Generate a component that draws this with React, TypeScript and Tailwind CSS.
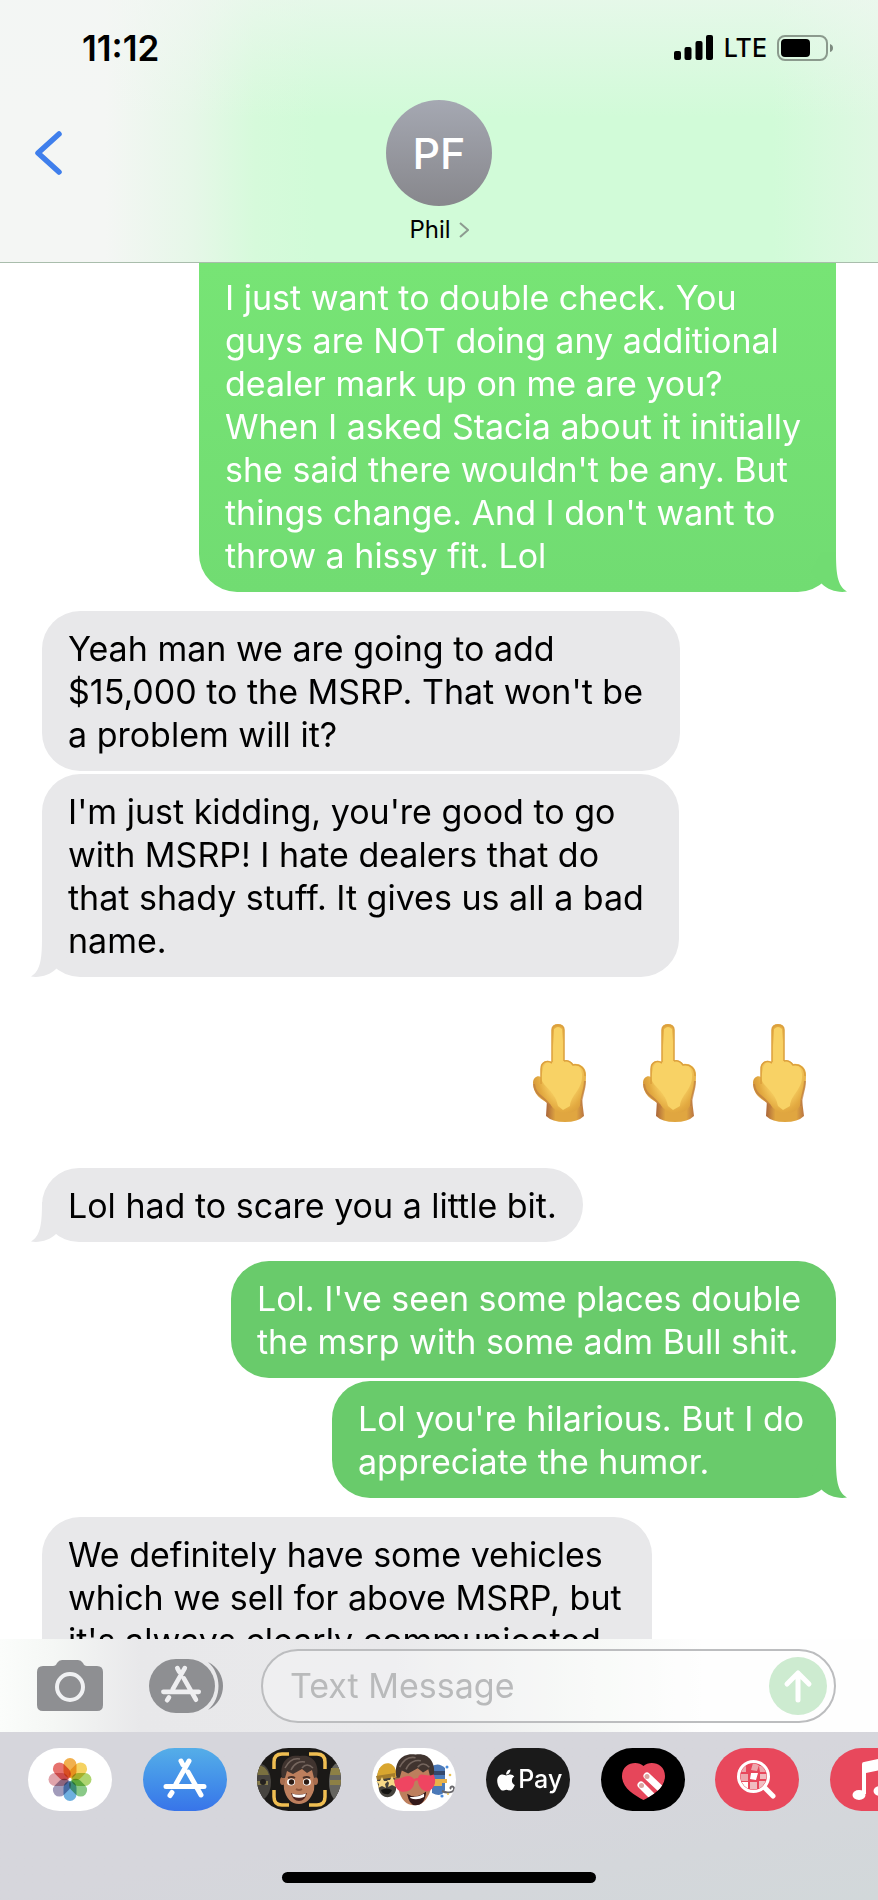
import { clsx } from "clsx";
import type { ReactNode } from "react";
import { FaApple } from "react-icons/fa";

type Message = {
  id: number;
  from: "me" | "them";
  lines: string[];
  width: string;
  color: string;
  tail?: boolean;
  clipped?: boolean;
  spacing?: string;
};

const beforeReaction: Message[] = [
  {
    id: 1,
    from: "me",
    lines: [
      "I just want to double check. You",
      "guys are NOT doing any additional",
      "dealer mark up on me are you?",
      "When I asked Stacia about it initially",
      "she said there wouldn't be any. But",
      "things change. And I don't want to",
      "throw a hissy fit. Lol"
    ],
    width: "w-[637px]",
    color: "bg-linear-to-b from-[#77e475] to-[#71dc72] text-white",
    tail: true,
    clipped: true
  },
  {
    id: 2,
    from: "them",
    lines: ["Yeah man we are going to add", "$15,000 to the MSRP. That won't be", "a problem will it?"],
    width: "w-[638px]",
    color: "bg-[#e8e8ea] text-black",
    spacing: "mt-[19px]"
  },
  {
    id: 3,
    from: "them",
    lines: ["I'm just kidding, you're good to go", "with MSRP! I hate dealers that do", "that shady stuff. It gives us all a bad", "name."],
    width: "w-[637px]",
    color: "bg-[#e8e8ea] text-black",
    tail: true,
    spacing: "mt-[3px]"
  }
];

const afterReaction: Message[] = [
  {
    id: 4,
    from: "them",
    lines: ["Lol had to scare you a little bit."],
    width: "w-[541px]",
    color: "bg-[#e8e8ea] text-black",
    tail: true
  },
  {
    id: 5,
    from: "me",
    lines: ["Lol. I've seen some places double", "the msrp with some adm Bull shit."],
    width: "w-[605px]",
    color: "bg-[#69cb6b] text-white",
    spacing: "mt-[19px]"
  },
  {
    id: 6,
    from: "me",
    lines: ["Lol you're hilarious. But I do", "appreciate the humor."],
    width: "w-[504px]",
    color: "bg-[#69cb6b] text-white",
    tail: true,
    spacing: "mt-[3px]"
  },
  {
    id: 7,
    from: "them",
    lines: ["We definitely have some vehicles", "which we sell for above MSRP, but", "it's always clearly communicated"],
    width: "w-[610px]",
    color: "bg-[#e8e8ea] text-black",
    spacing: "mt-[19px]"
  }
];

function Tail({ from, fill }: { from: Message["from"]; fill: string }) {
  return (
    <svg
      viewBox="0 0 40 40"
      className={clsx("absolute bottom-0 h-10 w-10", from === "me" ? "-right-[11px]" : "-left-[11px] -scale-x-100")}
      aria-hidden="true"
    >
      <path d="M29 0C29 20 30 34 40 39.5C31 41 21 38 15 32L4 20L15 0Z" fill={fill} />
    </svg>
  );
}

function Bubble({ message }: { message: Message }) {
  const mine = message.from === "me";
  const tailFill = !mine ? "#e8e8ea" : message.clipped ? "#71dc72" : "#69cb6b";
  return (
    <li className={clsx("flex shrink-0", mine ? "justify-end" : "justify-start", message.spacing)}>
      <div
        className={clsx(
          "relative max-w-full pr-4 pb-[15px] pl-[26px]",
          message.clipped ? "rounded-b-[38px] pt-[13px]" : "rounded-[38px] pt-4",
          message.width,
          message.color
        )}
      >
        {message.tail && <Tail from={message.from} fill={tailFill} />}
        {message.lines.map((line) => (
          <p key={line} className="relative whitespace-nowrap">{line}</p>
        ))}
      </div>
    </li>
  );
}

function FingerEmoji() {
  return (
    <svg viewBox="0 0 53 98" className="h-[98px] w-[53px]" aria-hidden="true">
      <defs>
        <radialGradient id="skin" cx="0.56" cy="0.5" r="0.56">
          <stop offset="0.55" stopColor="#f8d063" />
          <stop offset="0.85" stopColor="#e3aa41" />
          <stop offset="1" stopColor="#d99d3c" />
        </radialGradient>
        <linearGradient id="wrist" x1="0" x2="1">
          <stop offset="0" stopColor="#a9653a" />
          <stop offset="0.25" stopColor="#e0a640" />
          <stop offset="0.8" stopColor="#e0a640" />
          <stop offset="1" stopColor="#b87441" />
        </linearGradient>
      </defs>
      <path d="M14 76L13 92Q19 98 32 98Q45 98 51 92L49 76Z" fill="url(#wrist)" />
      <path
        d="M19 6Q19 0 25 0Q31 0 31 6V37C35 36 38 37 40 40C47 39 53 43 53 51C53 66 49 70 48 80C43 92 24 92 17 80C8 76 0 70 0 59C0 53 5 51 8 53V44C8 38 14 35 19 38Z"
        fill="url(#skin)"
      />
      <path d="M8 53C9 63 22 66 25 82L30 86L37 82C38 70 50 66 49 50C48 43 43 42 40 42C37 38 32 38 29 39V5Q25 1 21 5V40C16 37 10 40 10 45Z" fill="#f8d265" />
      <path d="M19 38V6Q19 1 25 1Q31 1 31 6V37M8 60V45C8 38 14 36 19 39M31 37C35 36 38 38 40 41C47 40 52 44 52 52" fill="none" stroke="#dca03d" strokeWidth="1.5" />
      <path d="M1 60C2 73 13 72 18 84M52 57C52 67 48 71 48 82" fill="none" stroke="#bd7c40" strokeWidth="2" opacity="0.7" />
    </svg>
  );
}

function StoreGlyph() {
  return (
    <g fill="none" stroke="currentColor" strokeWidth="5" strokeLinecap="round">
      <path d="M46 13L33 36M38 13L40 17M45 24L58 47M23 38.5H61M29 44.5L27 47.5" />
    </g>
  );
}

const petals = ["#f0a73a", "#f4cd50", "#a5d160", "#7cc37a", "#5ea7dd", "#9790b3", "#dd9aa2", "#e4635e"];

function PhotosArt() {
  return (
    <svg viewBox="0 0 84 63" className="h-full w-full" aria-hidden="true">
      {petals.map((color, i) => (
        <rect
          key={color}
          x="35.5"
          y="10"
          width="13"
          height="20"
          rx="6.5"
          fill={color}
          opacity="0.9"
          transform={`rotate(${i * 45} 42 31.5)`}
          className="mix-blend-multiply"
        />
      ))}
    </svg>
  );
}

function Face() {
  return (
    <>
      <path d="M26 25C27 13 55 13 58 25L57 42C54 51 49 56 42 56C34 56 29 50 27 41Z" fill="#bd7f5d" />
      <ellipse cx="25.5" cy="33" rx="2.5" ry="4" fill="#a96e4f" />
      <ellipse cx="58.5" cy="33" rx="2.5" ry="4" fill="#a96e4f" />
    </>
  );
}

function Hair() {
  return (
    <>
      <path d="M25 30C22 14 31 6 43 8C54 6 63 14 60 29L57 30L55 22L50 25L45 21L36 26L30 23L28 30Z" fill="#40342f" />
      <path d="M28 20C32 12 38 10 43 11M34 22C37 15 43 13 48 14M45 20C48 16 52 16 56 20" fill="none" stroke="#75665e" strokeWidth="1.5" />
    </>
  );
}

function MemojiArt() {
  return (
    <svg viewBox="0 0 84 63" className="h-full w-full" aria-hidden="true">
      <ellipse cx="3" cy="34" rx="11" ry="18" fill="#46433f" />
      <path d="M0 17Q9 17 12 27H0Z" fill="#7a7040" />
      <path d="M0 33H11V37H0Z" fill="#857b4c" />
      <circle cx="6" cy="34" r="3" fill="#24211f" />
      <ellipse cx="81" cy="34" rx="9" ry="19" fill="#65645f" />
      <path d="M74 20H84V27H73ZM73 32H84V37H73Z" fill="#8d8045" />
      <Face />
      <Hair />
      <path d="M31 30Q35 28 38 30M46 30Q50 28 53 30" stroke="#493026" strokeWidth="2" fill="none" />
      <ellipse cx="34" cy="34" rx="4" ry="3.5" fill="#fff" />
      <ellipse cx="50" cy="34" rx="4" ry="3.5" fill="#fff" />
      <circle cx="34.5" cy="34" r="2.7" fill="#2b1a13" />
      <circle cx="49.5" cy="34" r="2.7" fill="#2b1a13" />
      <path d="M39 41Q42 43 45 41" stroke="#8b553c" strokeWidth="2" fill="none" />
      <path d="M34 45Q42 48 50 45Q48 53 42 53Q36 53 34 45Z" fill="#512620" />
      <path d="M35 45.5Q42 48 49 45.5L48 48.5Q42 51 36 48.5Z" fill="#fff" />
      <path
        d="M17 21V14Q17 6 25 6H32M52 6H60Q68 6 68 14V21M68 42V49Q68 57 60 57H52M32 57H25Q17 57 17 49V42"
        fill="none"
        stroke="#f0be52"
        strokeWidth="3.5"
      />
    </svg>
  );
}

function StickersArt() {
  return (
    <svg viewBox="0 0 84 63" className="h-full w-full" aria-hidden="true">
      <path d="M5 32C5 12 24 12 24 29V42C21 52 9 51 7 42Z" fill="#45423c" />
      <path d="M5 29C6 13 21 11 24 23V30Z" fill="#d9a62f" />
      <path d="M4 28L23 25V29L5 32Z" fill="#a47d2d" />
      <path d="M10 29L12 33L16 33L13 36L14 40L10 38L6 40L7 36L4 33L8 33ZM20 28L22 32L25 32L23 35L24 39L20 37L16 39L17 35L15 32L18 32Z" fill="#f6d886" />
      <path d="M9 42Q15 39 20 42Q18 47 14 46Q10 46 9 42Z" fill="#151412" />
      <path d="M60 18Q67 14 73 20V42Q70 50 60 45Z" fill="#4b79b8" />
      <path d="M61 31H75V35H70V38H61Z" fill="#e9b14a" />
      <path d="M62 23H73V27H62Z" fill="#33486d" />
      <path d="M70 43C76 46 83 44 82 40C81 37 77 39 79 41" fill="none" stroke="#68676b" strokeWidth="2" />
      <circle cx="75" cy="19" r="1.5" fill="#4b8ddd" />
      <circle cx="78" cy="27" r="1.3" fill="#e9c04f" />
      <circle cx="70" cy="48" r="1.6" fill="#4b8ddd" />
      <circle cx="76" cy="46" r="1" fill="#e9c04f" />
      <g transform="translate(-2 -2) scale(1.06)">
        <Face />
        <path d="M35 45Q43 51 53 43Q52 56 43 56Q37 56 35 45Z" fill="#34191a" />
        <path d="M38 48Q45 49 51 45V48Q44 52 38 49Z" fill="#fff" />
        <Hair />
        <path d="M42 32C37 24 31 31 23 32C23 40 27 44 34 43C39 42 42 38 42 32Z" fill="#ef4561" />
        <path d="M45 31C47 23 52 30 60 27C64 35 59 42 54 43C48 42 45 37 45 31Z" fill="#ef4561" />
        <path d="M41 33Q44 30 46 32" fill="none" stroke="#ef4561" strokeWidth="2" />
      </g>
    </svg>
  );
}

function HeartArt() {
  return (
    <svg viewBox="0 0 84 63" className="h-full w-full" aria-hidden="true">
      <clipPath id="heart">
        <path d="M42.5 18C36 12 21 15 21 28C21 40 33 47 42.5 52C52 47 64 40 64 28C64 15 49 12 42.5 18Z" />
      </clipPath>
      <g clipPath="url(#heart)">
        <rect width="84" height="63" fill="#e6465a" />
        <g stroke="#fff" strokeWidth="7" strokeLinecap="round">
          <path d="M46 28L64 45M40 37L58 55" />
        </g>
        <circle cx="46" cy="28.5" r="2.5" fill="#dba3a0" />
        <circle cx="40.5" cy="37.5" r="2.5" fill="#dba3a0" />
      </g>
    </svg>
  );
}

function ImageSearchArt() {
  return (
    <svg viewBox="0 0 84 63" className="h-full w-full" aria-hidden="true">
      <clipPath id="lens">
        <circle cx="38.5" cy="28.5" r="13" />
      </clipPath>
      <g clipPath="url(#lens)">
        <path d="M24 14H31V24H24ZM38 15L44 17L42 23L36 22ZM25 26H33V33H25ZM44 18H52V24H45Z" fill="#eda7ad" />
        <path d="M36 25H43L41 32L35 31ZM26 34H33V42H26Z" fill="#fff" />
        <path d="M35 34H42V42H35ZM44 33H52V40H44ZM45 26H52V31H45Z" fill="#f0bcc0" />
      </g>
      <circle cx="38.5" cy="28.5" r="15" fill="none" stroke="#fff" strokeWidth="3" />
      <path d="M50 40L58 48" stroke="#fff" strokeWidth="5" strokeLinecap="round" />
    </svg>
  );
}

function MusicArt() {
  return (
    <svg viewBox="0 0 84 63" className="h-full w-full" aria-hidden="true">
      <path d="M32 16Q32 14 34 14L58 9V44H55V21L36 25V46H32Z" fill="#fff" />
      <ellipse cx="29" cy="47" rx="6.5" ry="5" fill="#fff" />
      <ellipse cx="50" cy="43" rx="6.5" ry="5" fill="#fff" />
    </svg>
  );
}

const apps: { name: string; background: string; art: ReactNode }[] = [
  { name: "Photos", background: "bg-white", art: <PhotosArt /> },
  {
    name: "App Store",
    background: "bg-linear-to-b from-[#55aee8] to-[#3874e9] text-white",
    art: <svg viewBox="0 0 84 63" className="h-full w-full" aria-hidden="true"><StoreGlyph /></svg>
  },
  { name: "Memoji", background: "bg-[#1b1917]", art: <MemojiArt /> },
  { name: "Stickers", background: "bg-white", art: <StickersArt /> },
  {
    name: "Apple Pay",
    background: "bg-[#1a1a1a] text-white",
    art: (
      <span className="flex h-full items-center justify-center text-[25px] font-medium">
        <FaApple size={24} aria-hidden="true" />
        Pay
      </span>
    )
  },
  { name: "Digital Touch", background: "bg-black", art: <HeartArt /> },
  { name: "Images", background: "bg-[#e8485c]", art: <ImageSearchArt /> },
  { name: "Music", background: "bg-[#e8485c]", art: <MusicArt /> }
];

function StatusBar() {
  return (
    <div className="flex h-[96px] items-center justify-between pr-[44px] pl-[82px]">
      <time className="text-[35px] font-semibold">11:12</time>
      <div className="flex items-center gap-[10px]">
        <svg viewBox="0 0 40 26" className="h-[26px] w-10" aria-hidden="true">
          <rect x="0" y="16" width="7" height="9" rx="2" />
          <rect x="10.5" y="12" width="7" height="13" rx="2" />
          <rect x="21.5" y="6" width="7" height="19" rx="2" />
          <rect x="32" y="0" width="7" height="25" rx="2" />
        </svg>
        <span className="text-[25px] font-medium">LTE</span>
        <svg viewBox="0 0 57 26" className="h-[26px] w-[57px]" aria-hidden="true">
          <rect x="1" y="1" width="49" height="24" rx="7" fill="none" stroke="#8b9a8d" strokeWidth="2" />
          <rect x="4" y="4" width="29" height="18" rx="4" />
          <path d="M53 9Q56 10 56 13Q56 16 53 17Z" fill="#7d8a7f" />
        </svg>
      </div>
    </div>
  );
}

function ChatHeader() {
  return (
    <header className="z-10 shrink-0 border-b border-[#a9bdac] bg-[linear-gradient(180deg,rgba(243,246,244,0.6),rgba(243,246,244,0)_45%),linear-gradient(90deg,#f4f6f4_12%,#e6f7e8_22%,#d6fadb_29%,#d1fbd8_36%,#d1fbd8_88%,#dff8e3)]">
      <StatusBar />
      <div className="grid h-[166px] grid-cols-[1fr_auto_1fr] items-start">
        <button type="button" aria-label="Back" className="mt-[34px] ml-[34px] w-[30px]">
          <svg viewBox="0 0 30 46" className="h-[46px] w-[30px]" fill="none" stroke="#3f7fec" strokeWidth="5.5" strokeLinecap="round" strokeLinejoin="round">
            <path d="M25 4L4 23L25 42" />
          </svg>
        </button>
        <button type="button" className="flex flex-col items-center pt-1">
          <span className="flex h-[106px] w-[106px] items-center justify-center rounded-full bg-linear-to-b from-[#a5a8b2] to-[#87878c] text-[43px] font-medium text-white">
            PF
          </span>
          <span className="mt-2 flex items-center gap-2 text-[24px] leading-8">
            Phil
            <svg viewBox="0 0 10 16" className="h-4 w-[10px]" fill="none" stroke="#8d9b90" strokeWidth="2">
              <path d="M1 1L9 8L1 15" />
            </svg>
          </span>
        </button>
      </div>
    </header>
  );
}

function Composer() {
  return (
    <form
      className="flex h-[93px] shrink-0 items-center bg-[linear-gradient(90deg,#fbfdfb,#f5f7f5_6%,#e8e8ea_16%,#e9e9eb_45%,#f6f8f6_68%,#fefefe_80%)] pr-[42px] pl-[37px]"
      onSubmit={(event) => event.preventDefault()}
    >
      <button type="button" aria-label="Camera">
        <svg viewBox="0 0 66 51" className="h-[51px] w-[66px]">
          <path d="M6 6H16Q19 6 20 3Q22 0 25 0H41Q44 0 46 3Q47 6 50 6H60Q66 6 66 12V45Q66 51 60 51H6Q0 51 0 45V12Q0 6 6 6Z" fill="#8e8f92" />
          <circle cx="33" cy="27" r="13" fill="none" stroke="#f0f1f3" strokeWidth="4" />
        </svg>
      </button>
      <button type="button" aria-label="Apps" className="ml-[46px] text-[#eeeef0]">
        <svg viewBox="0 0 75 54" className="h-[54px] w-[75px]">
          <rect width="66" height="54" rx="27" fill="#8e8f92" />
          <path d="M59 3C79 13 79 41 59 51C73 39 73 15 59 3Z" fill="#8e8f92" />
          <g transform="translate(-7 -3) scale(0.93)">
            <StoreGlyph />
          </g>
        </svg>
      </button>
      <label className="ml-[37px] flex h-[74px] min-w-0 flex-1 items-center rounded-full border-2 border-[#bcbdbf] bg-white/30 pr-[7px] pl-[27px]">
        <span className="sr-only">Message</span>
        <input type="text" placeholder="Text Message" className="min-w-0 flex-1 self-stretch bg-transparent outline-none placeholder:text-[#b9babb]" />
        <button type="submit" aria-label="Send" className="shrink-0">
          <svg viewBox="0 0 58 58" className="h-[58px] w-[58px]">
            <circle cx="29" cy="29" r="29" fill="#cdebd0" />
            <path d="M29 43V16M18 27L29 16L40 27" fill="none" stroke="#fff" strokeWidth="5" strokeLinecap="round" strokeLinejoin="round" />
          </svg>
        </button>
      </label>
    </form>
  );
}

function AppDrawer() {
  return (
    <nav aria-label="iMessage apps" className="flex h-[168px] shrink-0 flex-col items-center justify-between overflow-hidden bg-linear-to-br from-[#d6d6dc] from-50% to-[#d2d8da] pt-4 pb-[17px]">
      <div className="flex self-stretch">
        <div className="-mr-9 ml-7 flex flex-1 justify-between">
          {apps.map((app) => (
            <button
              key={app.name}
              type="button"
              aria-label={app.name}
              className={clsx("h-[63px] w-[84px] shrink-0 overflow-hidden rounded-full", app.background)}
            >
              {app.art}
            </button>
          ))}
        </div>
      </div>
      <div className="h-[11px] w-[314px] rounded-full bg-black" />
    </nav>
  );
}

export default function App() {
  return (
    <div className="flex h-screen flex-col overflow-hidden bg-white font-['Inter','Liberation_Sans',sans-serif] text-[34px] leading-[43px] text-black">
      <ChatHeader />
      <main className="min-h-0 flex-1 overflow-hidden pr-[42px] pl-[42px]">
        <ul className="flex flex-col">
          {beforeReaction.map((message) => <Bubble key={message.id} message={message} />)}
          <li className="flex justify-end gap-[57px] pt-[47px] pr-[30px] pb-[46px]" role="img" aria-label="Three middle finger emoji">
            <FingerEmoji />
            <FingerEmoji />
            <FingerEmoji />
          </li>
          {afterReaction.map((message) => <Bubble key={message.id} message={message} />)}
        </ul>
      </main>
      <Composer />
      <AppDrawer />
    </div>
  );
}
